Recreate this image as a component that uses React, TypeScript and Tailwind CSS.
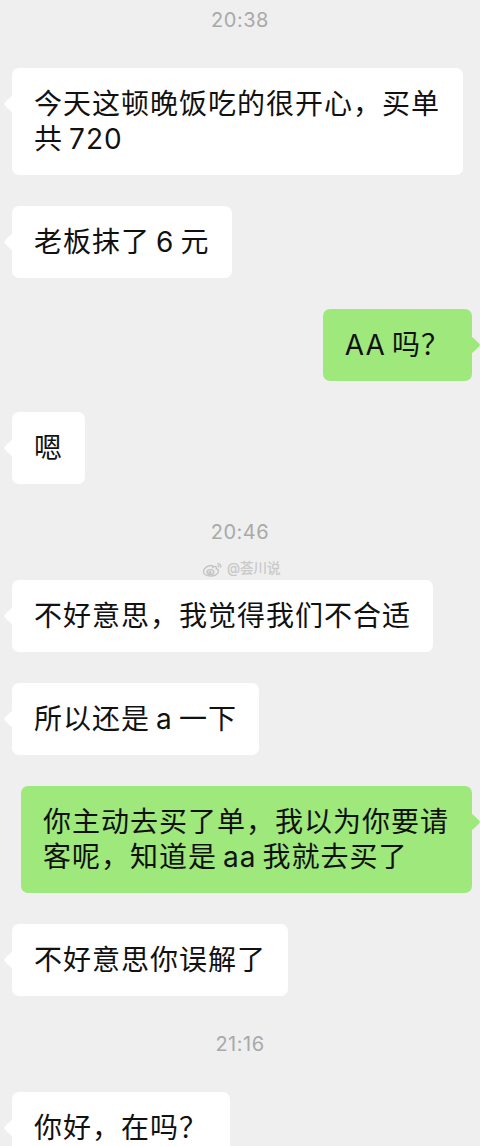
import React from 'react';

type Side = 'left' | 'right';

const Bubble: React.FC<{ side?: Side; text: string }> = ({ side = 'left', text }) => {
  const mine = side === 'right';
  return (
    <div className={`flex ${mine ? 'justify-end pr-2' : 'justify-start pl-3'}`}>
      <div
        className={`relative max-w-[451px] rounded-[7px] px-[22px] py-[18.5px] text-[28px] leading-[35px] tracking-[1px] text-[#111] ${
          mine ? 'bg-[#9fe87b]' : 'bg-white'
        }`}
      >
        {/* tail */}
        <span
          className={`absolute top-[30px] h-3 w-3 rotate-45 rounded-[2px] ${
            mine ? '-right-[6px] bg-[#9fe87b]' : '-left-[6px] bg-white'
          }`}
        />
        <p className="relative">{text}</p>
      </div>
    </div>
  );
};

const Time: React.FC<{ children: React.ReactNode }> = ({ children }) => (
  <div className="flex h-[34px] items-center justify-center text-[20px] tracking-[0.5px] text-[#a9a9a9]">
    {children}
  </div>
);

const WeiboMark = () => (
  <div className="absolute -top-[19px] left-[202px] flex items-center gap-[3px] text-[13.5px] leading-none text-[#bdbdbd]/90">
    <svg width="22" height="16" viewBox="0 0 22 16" fill="none" stroke="#c4c4c4" strokeWidth="1.4">
      <path d="M9 4.5c-3.5 0-7.5 3-7.5 6 0 2.6 3 4.5 7 4.5 4.5 0 8-2.3 8-4.8 0-1.5-1.3-2.2-2.3-2.4.6-1.4.2-2.6-1.8-2.3-1 .2-1.8.7-1.8.7.3-1.2-.2-1.9-1.6-1.7z" />
      <ellipse cx="8.5" cy="11" rx="3.4" ry="2.4" />
      <circle cx="8" cy="11.3" r="0.9" fill="#c4c4c4" />
      <path d="M15.5 2.5c2.2.2 3.6 1.8 3.3 4" />
      <path d="M15.3 4.6c1 .1 1.6.8 1.5 1.8" />
    </svg>
    <span className="[-webkit-text-stroke:0.3px_#d0d0d0]">@荟川说</span>
  </div>
);

export default function App() {
  return (
    <div className="h-[1146px] overflow-hidden bg-[#efefef] font-['Inter','Noto_Sans_CJK_SC',sans-serif]">
      <div className="flex flex-col gap-[31px] pt-[3px]">
        <Time>20:38</Time>
        <Bubble text={'今天这顿晚饭吃的很开心，买单共\u2009720'} />
        <Bubble text={'老板抹了\u20096\u2009元'} />
        <Bubble side="right" text={'AA\u2009吗？'} />
        <Bubble text="嗯" />
        <Time>20:46</Time>
        <div className="relative">
          <WeiboMark />
          <Bubble text="不好意思，我觉得我们不合适" />
        </div>
        <Bubble text={'所以还是\u2009a\u2009一下'} />
        <Bubble side="right" text={'你主动去买了单，我以为你要请客呢，知道是\u2009aa\u2009我就去买了'} />
        <Bubble text="不好意思你误解了" />
        <Time>21:16</Time>
        <Bubble text="你好，在吗？" />
      </div>
    </div>
  );
}
